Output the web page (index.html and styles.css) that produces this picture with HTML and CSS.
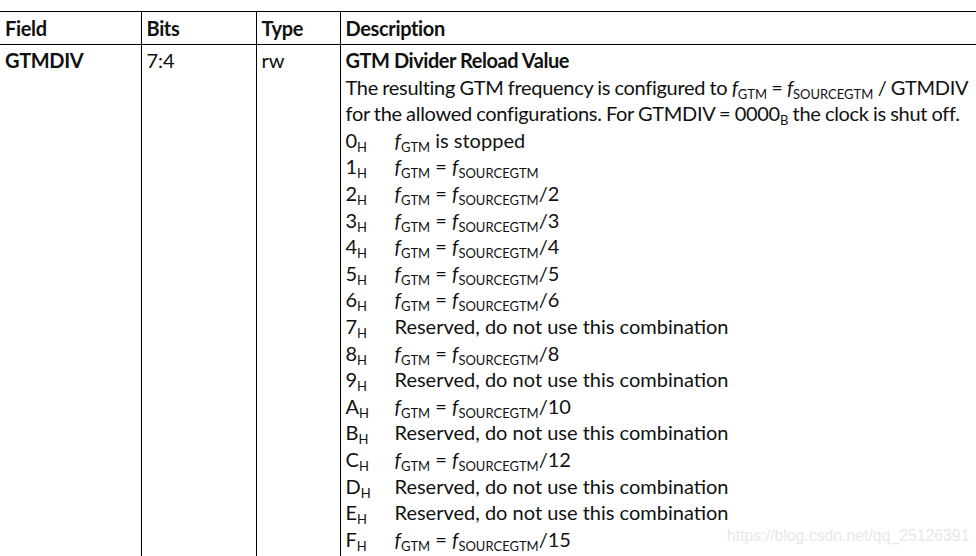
FILE: index.html
```html
<!DOCTYPE html>
<html>
<head>
<meta charset="utf-8">
<link rel="stylesheet" href="styles.css">
</head>
<body>
<div class="page">
  <table class="regtable">
    <colgroup>
      <col class="c-field"><col class="c-bits"><col class="c-type"><col class="c-desc">
    </colgroup>
    <thead>
      <tr><th>Field</th><th>Bits</th><th>Type</th><th>Description</th></tr>
    </thead>
    <tbody>
      <tr>
        <td class="fname">GTMDIV</td>
        <td>7:4</td>
        <td>rw</td>
        <td>
          <div class="title">GTM Divider Reload Value</div>
          <div class="para">The resulting GTM frequency is configured to <i>f</i><sub>GTM</sub> = <i>f</i><sub>SOURCEGTM</sub> / GTMDIV<br>for the allowed configurations. For GTMDIV = 0000<sub>B</sub> the clock is shut off.</div>
          <div class="enum">
            <div class="row"><span class="code">0<sub>H</sub></span><span><i>f</i><sub>GTM</sub> is stopped</span></div>
            <div class="row"><span class="code">1<sub>H</sub></span><span><i>f</i><sub>GTM</sub> = <i>f</i><sub>SOURCEGTM</sub></span></div>
            <div class="row"><span class="code">2<sub>H</sub></span><span><i>f</i><sub>GTM</sub> = <i>f</i><sub>SOURCEGTM</sub>/2</span></div>
            <div class="row"><span class="code">3<sub>H</sub></span><span><i>f</i><sub>GTM</sub> = <i>f</i><sub>SOURCEGTM</sub>/3</span></div>
            <div class="row"><span class="code">4<sub>H</sub></span><span><i>f</i><sub>GTM</sub> = <i>f</i><sub>SOURCEGTM</sub>/4</span></div>
            <div class="row"><span class="code">5<sub>H</sub></span><span><i>f</i><sub>GTM</sub> = <i>f</i><sub>SOURCEGTM</sub>/5</span></div>
            <div class="row"><span class="code">6<sub>H</sub></span><span><i>f</i><sub>GTM</sub> = <i>f</i><sub>SOURCEGTM</sub>/6</span></div>
            <div class="row"><span class="code">7<sub>H</sub></span><span>Reserved, do not use this combination</span></div>
            <div class="row"><span class="code">8<sub>H</sub></span><span><i>f</i><sub>GTM</sub> = <i>f</i><sub>SOURCEGTM</sub>/8</span></div>
            <div class="row"><span class="code">9<sub>H</sub></span><span>Reserved, do not use this combination</span></div>
            <div class="row"><span class="code">A<sub>H</sub></span><span><i>f</i><sub>GTM</sub> = <i>f</i><sub>SOURCEGTM</sub>/10</span></div>
            <div class="row"><span class="code">B<sub>H</sub></span><span>Reserved, do not use this combination</span></div>
            <div class="row"><span class="code">C<sub>H</sub></span><span><i>f</i><sub>GTM</sub> = <i>f</i><sub>SOURCEGTM</sub>/12</span></div>
            <div class="row"><span class="code">D<sub>H</sub></span><span>Reserved, do not use this combination</span></div>
            <div class="row"><span class="code">E<sub>H</sub></span><span>Reserved, do not use this combination</span></div>
            <div class="row"><span class="code">F<sub>H</sub></span><span><i>f</i><sub>GTM</sub> = <i>f</i><sub>SOURCEGTM</sub>/15</span></div>
          </div>
        </td>
      </tr>
    </tbody>
  </table>
  <div class="watermark">https://blog.csdn.net/qq_25126391</div>
</div>
</body>
</html>
```
FILE: styles.css
```css
html, body {
  margin: 0;
  padding: 0;
  background: #fff;
  overflow: hidden;
}
.page {
  position: relative;
  width: 976px;
  height: 556px;
  overflow: hidden;
  padding-top: 11px;
  box-sizing: border-box;
}
.regtable {
  border-collapse: collapse;
  table-layout: fixed;
  width: 1000px;
  font-family: "Lato", "Liberation Sans", sans-serif;
  font-size: 20px;
  color: #111;
}
.c-field { width: 141px; }
.c-bits { width: 115px; }
.c-type { width: 84px; }
.c-desc { width: 660px; }
.regtable th, .regtable td {
  border: 1px solid #000;
  text-align: left;
  vertical-align: top;
  padding: 0 6px 0 5px;
  white-space: nowrap;
}
.regtable tr > :first-child { border-left: none; }
.regtable th {
  font-weight: 700;
  letter-spacing: -0.35px;
  height: 32px;
  line-height: 32px;
}
.regtable td {
  line-height: 26.6px;
  padding-top: 2px;
  padding-bottom: 20px;
  border-bottom: none;
}
.regtable td.fname {
  font-weight: 700;
  letter-spacing: -0.35px;
}
.title {
  font-weight: 700;
  letter-spacing: -0.45px;
}
.para { letter-spacing: -0.3px; word-spacing: -0.5px; }
sub {
  font-size: 13px;
  vertical-align: -4px;
  line-height: 0;
  letter-spacing: 0;
}
i { font-style: italic; }
.row { display: flex; }
.code { width: 49px; flex: none; }
.watermark {
  position: absolute;
  left: 727px;
  top: 527px;
  font-family: "Liberation Sans", Arial, sans-serif;
  font-size: 15.8px;
  color: #e8e8e8;
}
```
